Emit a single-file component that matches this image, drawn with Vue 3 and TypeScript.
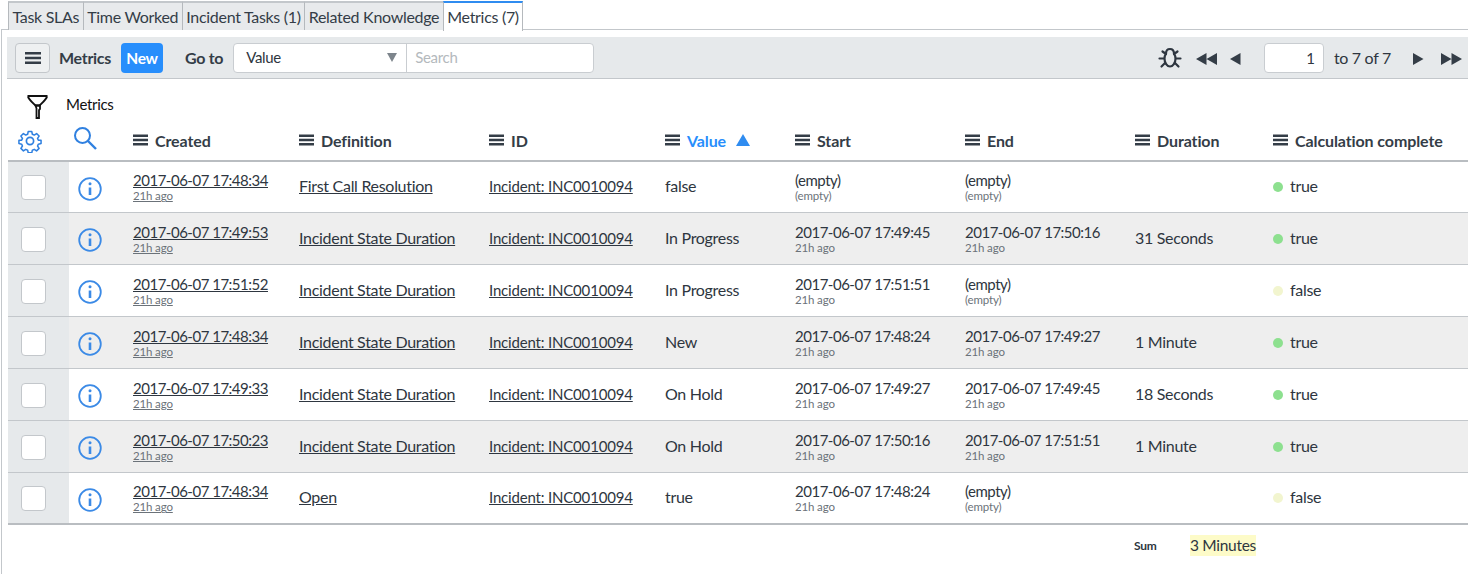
<script setup lang="ts">
interface Row {
  created: string
  definition: string
  value: string
  start: string
  startAgo: string
  end: string
  endAgo: string
  duration: string
  complete: boolean
}
const tabs = ['Task SLAs', 'Time Worked', 'Incident Tasks (1)', 'Related Knowledge', 'Metrics (7)']
const heads = [
  { label: 'Created', cls: '' },
  { label: 'Definition', cls: '' },
  { label: 'ID', cls: '' },
  { label: 'Value', cls: 'sorted' },
  { label: 'Start', cls: '' },
  { label: 'End', cls: '' },
  { label: 'Duration', cls: '' },
  { label: 'Calculation complete', cls: '' },
]
const rows: Row[] = [
  { created: '2017-06-07 17:48:34', definition: 'First Call Resolution', value: 'false', start: '(empty)', startAgo: '(empty)', end: '(empty)', endAgo: '(empty)', duration: '', complete: true },
  { created: '2017-06-07 17:49:53', definition: 'Incident State Duration', value: 'In Progress', start: '2017-06-07 17:49:45', startAgo: '21h ago', end: '2017-06-07 17:50:16', endAgo: '21h ago', duration: '31 Seconds', complete: true },
  { created: '2017-06-07 17:51:52', definition: 'Incident State Duration', value: 'In Progress', start: '2017-06-07 17:51:51', startAgo: '21h ago', end: '(empty)', endAgo: '(empty)', duration: '', complete: false },
  { created: '2017-06-07 17:48:34', definition: 'Incident State Duration', value: 'New', start: '2017-06-07 17:48:24', startAgo: '21h ago', end: '2017-06-07 17:49:27', endAgo: '21h ago', duration: '1 Minute', complete: true },
  { created: '2017-06-07 17:49:33', definition: 'Incident State Duration', value: 'On Hold', start: '2017-06-07 17:49:27', startAgo: '21h ago', end: '2017-06-07 17:49:45', endAgo: '21h ago', duration: '18 Seconds', complete: true },
  { created: '2017-06-07 17:50:23', definition: 'Incident State Duration', value: 'On Hold', start: '2017-06-07 17:50:16', startAgo: '21h ago', end: '2017-06-07 17:51:51', endAgo: '21h ago', duration: '1 Minute', complete: true },
  { created: '2017-06-07 17:48:34', definition: 'Open', value: 'true', start: '2017-06-07 17:48:24', startAgo: '21h ago', end: '(empty)', endAgo: '(empty)', duration: '', complete: false },
]
</script>

<template>
  <div class="page">
    <div class="tabs">
      <div v-for="(t, i) in tabs" :key="t" class="tab" :class="{ active: i === 4 }">{{ t }}</div>
    </div>
    <div class="panel">
      <div class="toolbar">
        <button class="menu-btn" aria-label="menu">
          <svg width="16" height="12" viewBox="0 0 16 12"><path d="M0 0h16v2.400H0zM0 4.800h16v2.400H0zM0 9.600h16V12H0z" fill="#343d47" /></svg>
        </button>
        <span class="tb-title">Metrics</span>
        <button class="new-btn">New</button>
        <span class="goto">Go to</span>
        <div class="search">
          <div class="select">Value<span class="caret"></span></div>
          <div class="search-input">Search</div>
        </div>
        <div class="pager">
          <svg class="bug" width="24" height="24" viewBox="0 0 24 24" fill="none" stroke="#2e3640" stroke-width="2.200">
            <path d="M12 3c-2.600 0-4 2-4 4.500-1 1.500-1.500 3-1.500 5 0 4.500 2.500 8 5.500 8s5.500-3.500 5.500-8c0-2-.5-3.500-1.500-5C16 5 14.600 3 12 3z" />
            <path d="M8 8 4.500 5.500M16 8l3.500-2.500M6 12.500H1.500M18 12.500h4.500M7 17l-3.500 3.500M17 17l3.500 3.500" stroke-linecap="round" />
          </svg>
          <svg class="arrow first" width="22" height="12" viewBox="0 0 22 12"><path d="M10.500 0v12L0 6zM21 0v12L10.500 6z" fill="#343d47" /></svg>
          <svg class="arrow prev" width="11" height="12" viewBox="0 0 11 12"><path d="M10.500 0v12L0 6z" fill="#343d47" /></svg>
          <div class="page-input">1</div>
          <span class="count">to 7 of 7</span>
          <svg class="arrow next" width="11" height="12" viewBox="0 0 11 12"><path d="M0 0v12l10.500-6z" fill="#343d47" /></svg>
          <svg class="arrow last" width="22" height="12" viewBox="0 0 22 12"><path d="M0 0v12l10.500-6zM10.500 0v12L21 6z" fill="#343d47" /></svg>
        </div>
      </div>
      <div class="filter">
        <svg width="24" height="26" viewBox="0 0 24 26" fill="none" stroke="#111" stroke-width="2">
          <path d="M1.500 2h20M2 2.500c1 3.500 5.500 7 7.500 9h4c2-2 6.500-5.500 7.500-9" />
          <path d="M9.500 11.500h4.500v3.500l-1 1v8h-2.500v-9.500z" stroke-width="1.800" />
        </svg>
        <span>Metrics</span>
      </div>
      <table class="grid">
        <colgroup>
          <col class="c-check" /><col class="c-info" /><col class="c-created" /><col class="c-def" /><col class="c-id" /><col class="c-value" /><col class="c-date" /><col class="c-date" /><col class="c-dur" /><col />
        </colgroup>
        <thead>
          <tr>
            <th class="icon-th">
              <svg class="gear" width="24" height="24" viewBox="0 0 24 24" fill="none" stroke="#2f80e0" stroke-width="1.700" stroke-linejoin="round">
                <path d="M10 1.500h4l.6 3 2.100.9 2.600-1.700 2.800 2.800-1.700 2.600.9 2.100 3-.1v3.800l-3 .6-.9 2.100 1.700 2.600-2.800 2.800-2.600-1.700-2.100.9-.6 3h-4l-.6-3-2.100-.9-2.600 1.700-2.800-2.800 1.700-2.600-.9-2.100-3-.6v-3.800l3 .1.900-2.100-1.700-2.600 2.800-2.800 2.600 1.700 2.100-.9z" transform="translate(1.200 1.200) scale(.9)" />
                <circle cx="12" cy="12" r="3.600" />
              </svg>
            </th>
            <th class="icon-th">
              <svg class="glass" width="24" height="24" viewBox="0 0 24 24" fill="none" stroke="#2f80e0" stroke-width="2">
                <circle cx="9.500" cy="9.500" r="7.500" />
                <path d="m15 15 8 8" stroke-width="2.400" />
              </svg>
            </th>
            <th v-for="h in heads" :key="h.label" :class="h.cls">
              <span class="th-inner">
                <svg width="15" height="12" viewBox="0 0 15 12"><path d="M0 .5h15v2.400H0zM0 4.800h15v2.400H0zM0 9.100h15v2.400H0z" fill="#343d47" /></svg>
                {{ h.label }}
                <svg v-if="h.cls" class="sort" width="14" height="12" viewBox="0 0 14 12"><path d="M7 0l7 12H0z" fill="#2f8cf0" /></svg>
              </span>
            </th>
          </tr>
        </thead>
        <tbody>
          <tr v-for="(r, i) in rows" :key="i" :class="{ odd: i % 2 === 1 }">
            <td class="check-cell"><span class="check"></span></td>
            <td class="info-cell">
              <svg width="24" height="24" viewBox="0 0 24 24" fill="none" stroke="#3b8ae6" stroke-width="1.800">
                <circle cx="12" cy="12" r="10.800" />
                <path d="M12 10.500v7.500" stroke-width="2.600" />
                <circle cx="12" cy="6.800" r="1.500" fill="#3b8ae6" stroke="none" />
              </svg>
            </td>
            <td class="stack"><a class="main link">{{ r.created }}</a><a class="ago link">21h ago</a></td>
            <td><a class="link">{{ r.definition }}</a></td>
            <td class="id-cell"><a class="link">Incident: INC0010094</a></td>
            <td>{{ r.value }}</td>
            <td class="stack"><span class="main">{{ r.start }}</span><span class="ago">{{ r.startAgo }}</span></td>
            <td class="stack"><span class="main">{{ r.end }}</span><span class="ago">{{ r.endAgo }}</span></td>
            <td>{{ r.duration }}</td>
            <td><span class="dot" :class="r.complete ? 'green' : 'pale'"></span>{{ r.complete ? 'true' : 'false' }}</td>
          </tr>
        </tbody>
      </table>
      <div class="sum-row">
        <span class="sum-label">Sum</span>
        <span class="sum-value">3 Minutes</span>
      </div>
    </div>
  </div>
</template>

<style scoped>
.page {
  width: 1468px;
  height: 574px;
  overflow: hidden;
  background: #fff;
  color: #2e3640;
  font-family: "Lato", "Liberation Sans", sans-serif;
  font-size: 16px;
  box-sizing: border-box;
}
.tabs {
  display: flex;
  height: 30px;
  padding: 1px 0 0 8px;
  box-sizing: border-box;
}
.tab {
  height: 29px;
  line-height: 27px;
  padding: 0 3.500px;
  background: #e8eaec;
  border-top: 2px solid #c3c7cb;
  border-left: 1px solid #b5b9bd;
  box-sizing: border-box;
  white-space: nowrap;
  font-size: 16px;
  letter-spacing: -0.3px;
  color: #343d47;
}
.tab.active {
  background: #fff;
  border-top-color: #2f8cf0;
  border-right: 1px solid #b5b9bd;
  height: 30px;
  position: relative;
  z-index: 1;
}
.panel {
  border-top: 1px solid #c3c7cb;
  border-left: 1px solid #c3c7cb;
  margin-left: 1px;
  margin-top: -1px;
  padding: 7px 0 0 5px;
  height: 545px;
  box-sizing: border-box;
}
.toolbar {
  height: 42px;
  background: #e6e9eb;
  border-bottom: 1px solid #c3c7cb;
  box-sizing: border-box;
  display: flex;
  align-items: center;
  padding-left: 8px;
}
.menu-btn {
  width: 35px;
  height: 30px;
  border: 1px solid #c3c7cb;
  border-radius: 4px;
  background: #eef0f1;
  padding: 0;
  display: flex;
  align-items: center;
  justify-content: center;
}
.tb-title {
  font-weight: 700;
  letter-spacing: -0.3px;
  margin-left: 9px;
  color: #343d47;
}
.new-btn {
  width: 42px;
  height: 30px;
  margin-left: 10px;
  background: #278efc;
  color: #fff;
  border: 0;
  border-radius: 4px;
  font: 700 15.500px "Lato", sans-serif;
  letter-spacing: -0.3px;
  padding: 0;
}
.goto {
  margin-left: 22px;
  font-weight: 700;
  letter-spacing: -0.3px;
  color: #343d47;
}
.search {
  margin-left: 10px;
  width: 361px;
  height: 30px;
  display: flex;
  background: #fff;
  border: 1px solid #c9cdd1;
  border-radius: 4px;
  box-sizing: border-box;
}
.select {
  width: 173px;
  border-right: 1px solid #c9cdd1;
  padding-left: 12px;
  line-height: 27px;
  box-sizing: border-box;
  position: relative;
  font-size: 15px;
  letter-spacing: -0.3px;
}
.caret {
  position: absolute;
  right: 9px;
  top: 9px;
  border-left: 5px solid transparent;
  border-right: 5px solid transparent;
  border-top: 9px solid #7d858c;
}
.search-input {
  color: #b4b9bd;
  padding-left: 8px;
  line-height: 26px;
  font-size: 15px;
  letter-spacing: -0.3px;
}
.pager {
  margin-left: auto;
  display: flex;
  align-items: center;
}
.bug { margin-right: 14px; }
.arrow { margin-top: 2px; }
.first { margin-right: 12px; }
.prev { margin-right: 23px; }
.page-input {
  width: 60px;
  height: 30px;
  background: #fff;
  border: 1px solid #c9cdd1;
  border-radius: 4px;
  box-sizing: border-box;
  text-align: right;
  padding-right: 8px;
  line-height: 28px;
  font-size: 15px;
}
.count {
  margin-left: 10px;
  margin-right: 22px;
  letter-spacing: -0.3px;
  margin-top: -1px;
}
.next { margin-right: 17px; }
.last { margin-right: 5px; }
.filter {
  height: 46px;
  display: flex;
  align-items: center;
  padding-left: 19px;
  gap: 16px;
  font-size: 15px;
  color: #111;
  letter-spacing: -0.3px;
}
.filter svg { margin-top: 9px; }
.filter span { margin-top: 4px; }
.grid {
  width: 1460px;
  margin-left: 1px;
  table-layout: fixed;
  border-collapse: collapse;
  letter-spacing: -0.3px;
}
.c-check { width: 61px; }
.c-info { width: 56px; }
.c-created { width: 166px; }
.c-def { width: 190px; }
.c-id { width: 176px; }
.c-value { width: 130px; }
.c-date { width: 170px; }
.c-dur { width: 138px; }
th {
  height: 36px;
  padding: 0 0 5px 8px;
  text-align: left;
  border-bottom: 2px solid #b9bdc1;
  font-weight: 700;
  font-size: 16px;
  letter-spacing: -0.1px;
  white-space: nowrap;
  color: #343d47;
  box-sizing: border-box;
}
th.icon-th { padding: 0 0 4px; position: relative; }
.gear { display: block; margin: 0 0 0 10px; }
.glass { display: block; margin: -5px 0 0 4px; }
.th-inner {
  display: inline-flex;
  align-items: center;
  gap: 7px;
}
th.sorted .th-inner { color: #278efc; }
.sort { margin-left: 3px; }
td {
  height: 52px;
  padding: 0 0 2px 8px;
  border-bottom: 1px solid #c3c7cb;
  vertical-align: middle;
  white-space: nowrap;
  box-sizing: border-box;
}
td.stack { padding: 0 0 0 8px; }
tbody tr:first-child td { height: 51px; }
tbody tr:last-child td { border-bottom: 2px solid #b9bdc1; }
tr.odd td { background: #eeeeee; }
tr td.check-cell {
  background: #e6e9eb;
  padding: 2px 0 0 13px;
}
td.info-cell { padding: 0 0 0 9px; }
td.info-cell svg { display: block; margin-top: 4px; }
td.id-cell {
  padding-bottom: 1px;
  font-size: 15px;
  letter-spacing: -0.18px;
}
.check {
  display: block;
  width: 25px;
  height: 25px;
  background: #fff;
  border: 1px solid #c3c7cb;
  border-radius: 4px;
  box-sizing: border-box;
}
.link {
  color: #2e3640;
  text-decoration: underline;
}
.main {
  display: block;
  line-height: 18px;
  font-size: 15px;
  letter-spacing: -0.49px;
}
.ago {
  display: block;
  font-size: 11.500px;
  line-height: 12px;
  margin-top: 1px;
  color: #6b7279;
  letter-spacing: -0.15px;
}
.dot {
  display: inline-block;
  width: 10px;
  height: 10px;
  border-radius: 50%;
  margin-right: 7px;
}
.green { background: #8de08f; }
.pale { background: #f2f5cf; }
.sum-row {
  display: flex;
  align-items: center;
  height: 41px;
  padding-left: 1127px;
}
.sum-label {
  font-size: 12px;
  font-weight: 700;
  letter-spacing: -0.2px;
  width: 56px;
}
.sum-value {
  background: #fdfbc8;
  line-height: 21px;
  font-size: 15.500px;
  letter-spacing: -0.3px;
}
</style>
